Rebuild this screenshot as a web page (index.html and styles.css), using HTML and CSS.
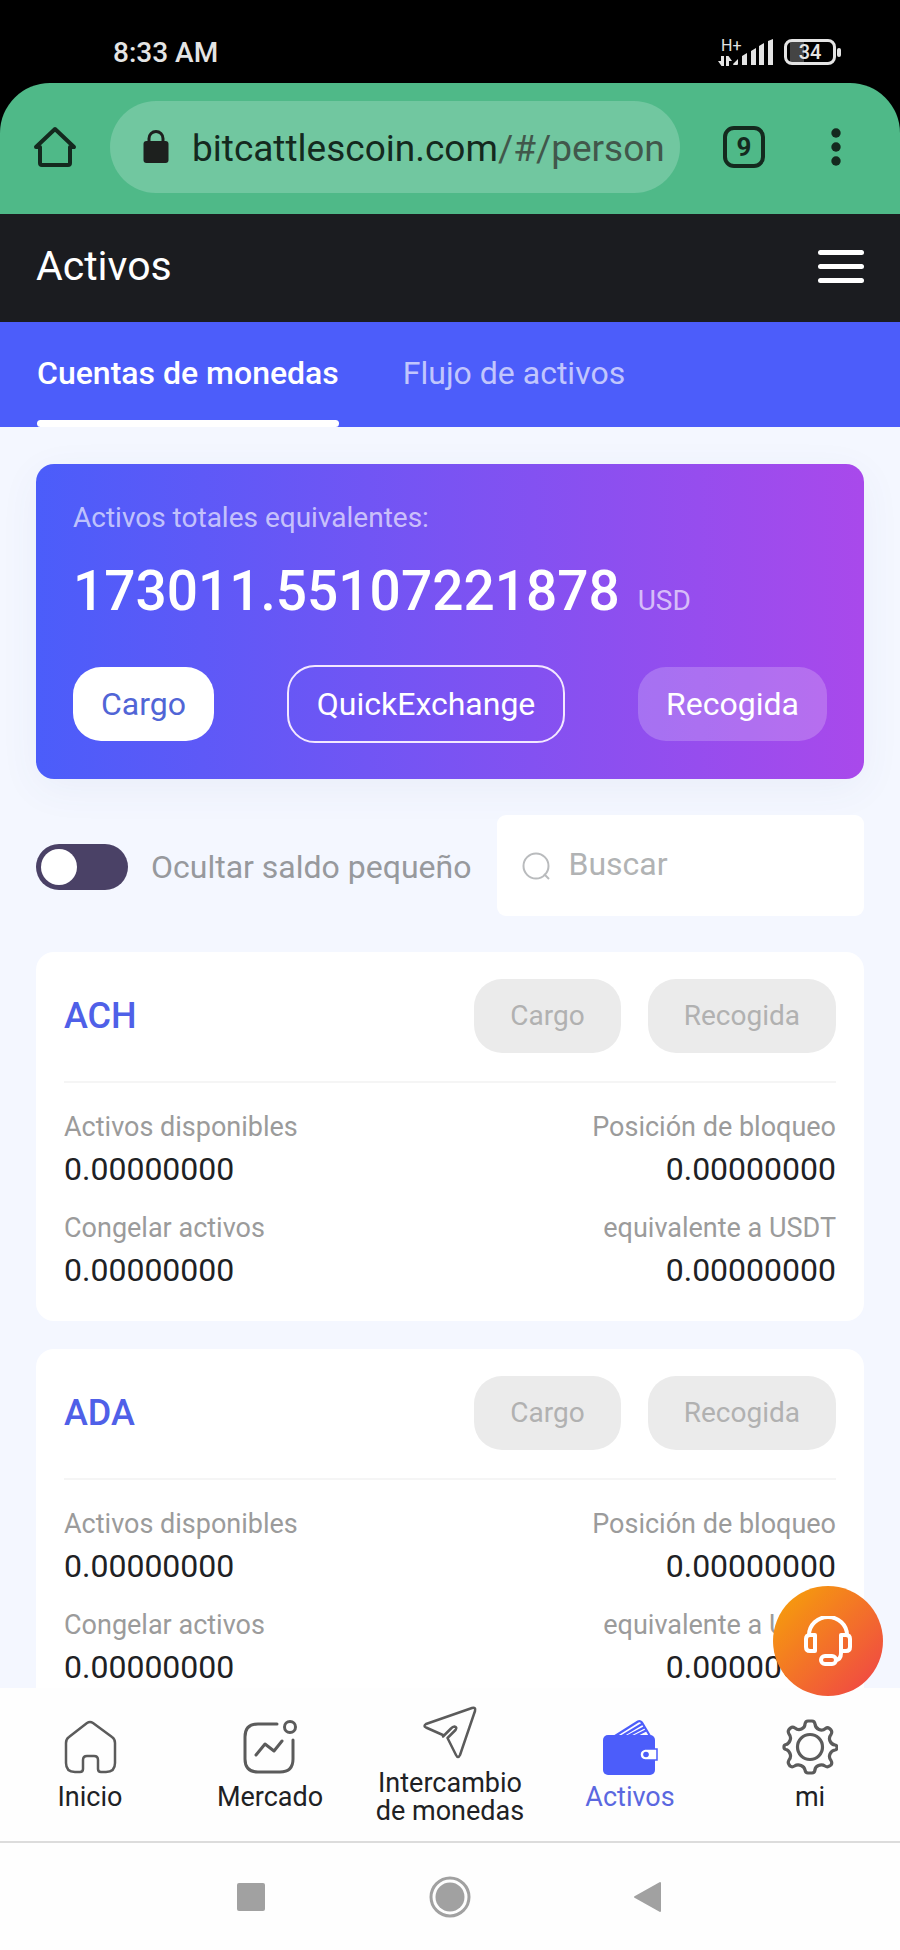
FILE: index.html
```html
<!DOCTYPE html>
<html lang="es">
<head>
<meta charset="utf-8">
<meta name="viewport" content="width=device-width, initial-scale=1">
<title>Activos</title>
<link rel="stylesheet" href="styles.css">
</head>
<body>
<div class="screen">
  <div class="status-bar">
    <span class="status-time">8:33 AM</span>
    <div class="status-icons">
      <div class="network">
        <span class="network-type">H+</span>
        <svg class="network-arrows" width="14" height="10" viewBox="0 0 14 10" aria-hidden="true"><path fill="#e4e4e4" d="M3 0h3v10H3.500L0 5h3zM8 10V0h2.500L14 5h-3v5z"/></svg>
      </div>
      <svg class="signal" width="42" height="27" viewBox="0 0 42 27" aria-hidden="true"><path fill="#e4e4e4" d="M0 25l5-5v5q0 1-1 1H1q-1 0-1-1zM9 17l5-3v12H9zM18 12l5-3v17h-5zM26 7l5-3v22h-5zM35 2l5-2v26h-5z"/></svg>
      <div class="battery">
        <span class="battery-body">34</span>
        <span class="battery-cap"></span>
      </div>
    </div>
  </div>

  <div class="browser-frame">
    <div class="browser-bar">
      <button class="icon-button" type="button" aria-label="Página principal">
        <svg width="44" height="44" viewBox="0 0 44 44" aria-hidden="true"><path fill="none" stroke="#14291e" stroke-width="4" stroke-linecap="round" stroke-linejoin="round" d="M3 22L22 4l19 18h-4v16q0 2-2 2H9q-2 0-2-2V22z"/></svg>
      </button>
      <div class="address">
        <svg width="26" height="34" viewBox="0 0 26 34" aria-hidden="true"><path fill="none" stroke="#1d201e" stroke-width="3" d="M6 12V8.500a7 7 0 0 1 14 0V12"/><rect x="0.500" y="11" width="25" height="22" rx="3" fill="#1d201e"/></svg>
        <span class="address-text">bitcattlescoin.com<span class="address-path">/#/person</span></span>
      </div>
      <button class="tab-count" type="button" aria-label="Pestañas abiertas">9</button>
      <button class="icon-button" type="button" aria-label="Más opciones">
        <svg width="10" height="40" viewBox="0 0 10 40" aria-hidden="true"><g fill="#14291e"><circle cx="5" cy="6" r="4.700"/><circle cx="5" cy="20" r="4.700"/><circle cx="5" cy="34" r="4.700"/></g></svg>
      </button>
    </div>
  </div>

  <header class="page-header">
    <h1 class="page-title">Activos</h1>
    <button class="menu-button" type="button" aria-label="Menú"><span></span><span></span><span></span></button>
  </header>

  <nav class="tabs" aria-label="Secciones">
    <a class="tab tab-active" href="#cuentas">Cuentas de monedas</a>
    <a class="tab" href="#flujo">Flujo de activos</a>
  </nav>

  <main class="content">
    <section class="balance">
      <p class="balance-label">Activos totales equivalentes:</p>
      <p class="balance-amount">173011.55107221878<span class="balance-unit">USD</span></p>
      <div class="balance-actions">
        <button class="pill pill-solid" type="button">Cargo</button>
        <button class="pill pill-outline" type="button">QuickExchange</button>
        <button class="pill pill-soft" type="button">Recogida</button>
      </div>
    </section>

    <div class="filters">
      <label class="hide-small">
        <input class="switch" type="checkbox">
        <span>Ocultar saldo pequeño</span>
      </label>
      <label class="search">
        <svg width="29" height="28" viewBox="0 0 29 28" aria-hidden="true"><g fill="none" stroke="#b9bbbd" stroke-width="2"><circle cx="14" cy="14" r="12.500"/><path d="M22 22l5 5"/></g></svg>
        <input class="search-input" type="search" placeholder="Buscar" aria-label="Buscar">
      </label>
    </div>

    <section class="assets">
      <article class="asset">
        <div class="asset-head">
          <h2 class="asset-name">ACH</h2>
          <button class="pill pill-muted" type="button" disabled>Cargo</button>
          <button class="pill pill-muted" type="button" disabled>Recogida</button>
        </div>
        <dl class="asset-data">
          <div><dt>Activos disponibles</dt><dd>0.00000000</dd></div>
          <div><dt>Posición de bloqueo</dt><dd>0.00000000</dd></div>
          <div><dt>Congelar activos</dt><dd>0.00000000</dd></div>
          <div><dt>equivalente a USDT</dt><dd>0.00000000</dd></div>
        </dl>
      </article>
      <article class="asset">
        <div class="asset-head">
          <h2 class="asset-name">ADA</h2>
          <button class="pill pill-muted" type="button" disabled>Cargo</button>
          <button class="pill pill-muted" type="button" disabled>Recogida</button>
        </div>
        <dl class="asset-data">
          <div><dt>Activos disponibles</dt><dd>0.00000000</dd></div>
          <div><dt>Posición de bloqueo</dt><dd>0.00000000</dd></div>
          <div><dt>Congelar activos</dt><dd>0.00000000</dd></div>
          <div><dt>equivalente a USDT</dt><dd>0.00000000</dd></div>
        </dl>
      </article>
    </section>
  </main>

  <footer class="bottom">
    <button class="support" type="button" aria-label="Atención al cliente">
      <svg width="50" height="50" viewBox="0 0 50 50" aria-hidden="true"><g fill="none" stroke="#fff" stroke-width="4" stroke-linejoin="round"><path d="M6 19a19 18 0 0 1 38 0"/><path d="M12 19v16H7q-4 0-4-4v-8q0-4 4-4zM38 19v16h5q4 0 4-4v-8q0-4-4-4z"/><path d="M38 34v3q0 7-6 7"/><rect x="18" y="40" width="15" height="8" rx="4"/></g></svg>
    </button>
    <nav class="bottom-nav" aria-label="Principal">
      <a class="nav-item" href="#inicio">
        <svg width="56" height="56" viewBox="0 0 56 56" aria-hidden="true"><path fill="none" stroke="#5b5b5b" stroke-width="2.500" stroke-linejoin="round" d="M25 4q3-2 6 0l19 14q3 2 3 6v20q0 9-9 9h-5q-3 0-3-3V41q0-4-4-4h-7q-4 0-4 4v9q0 3-3 3h-5q-9 0-9-9V24q0-4 3-6z"/></svg>
        <span>Inicio</span>
      </a>
      <a class="nav-item" href="#mercado">
        <svg width="56" height="56" viewBox="0 0 56 56" aria-hidden="true"><g fill="none" stroke="#5b5b5b" stroke-width="3" stroke-linecap="round" stroke-linejoin="round"><path d="M35 5H16Q3 5 3 18v22q0 13 13 13h22q13 0 13-13V21"/><circle cx="48" cy="8" r="5.500"/><path d="M14 36l9-11 9 7 8-10"/></g></svg>
        <span>Mercado</span>
      </a>
      <a class="nav-item" href="#intercambio">
        <svg width="56" height="56" viewBox="0 0 56 56" aria-hidden="true"><path fill="none" stroke="#5b5b5b" stroke-width="2.500" stroke-linejoin="round" d="M22 30.500L4 22.500Q1 21 4 19L50 3q4-1 3 3L38 50q-2 4-4 0L25.500 33l8-8q2-3-1-3.500-2 0-3.500 2L21 31.500z"/></svg>
        <span>Intercambio<br>de monedas</span>
      </a>
      <a class="nav-item nav-active" href="#activos">
        <svg width="56" height="56" viewBox="0 0 56 56" aria-hidden="true"><path fill="none" stroke="#4c5dfa" stroke-width="2.200" stroke-linejoin="round" d="M13 17L36 2.500q2-1 4 1L48 17M20 17l20-12M26 17l17-9M33 17l12-6"/><rect x="1" y="16" width="52" height="40" rx="5" fill="#4c5dfa"/><path fill="#fff" stroke="#4c5dfa" stroke-width="1.500" d="M55 30v11H43q-5-1-5-5.500T43 30z"/><circle cx="44" cy="35.500" r="2.800" fill="#4c5dfa"/></svg>
        <span>Activos</span>
      </a>
      <a class="nav-item" href="#mi">
        <svg width="56" height="56" viewBox="0 0 56 56" aria-hidden="true"><g fill="none" stroke="#5b5b5b" stroke-width="3.200" stroke-linejoin="round"><circle cx="28" cy="28" r="12.500"/><path d="M23 5q.5-3 3-3h4q2.500 0 3 3 .5 4 4 5.500t6.500-1q2-1.500 4 0l1.500 1.500q1.500 2 0 4.500-2.500 3-1 6.500t5 4q2 .5 2 2v1q0 1.500-2 2-3.500.5-5 4t1 6.500q1.500 2.500 0 4.500L47.500 47q-2 1.500-4.500 0-3-2-6.500-.5T33 51q-.5 3-3 3h-4q-2.500 0-3-3-.5-3-4-4.500t-6.500.5q-2.500 1.500-4.500 0L7 45.500q-1.500-2 0-4.500 2.500-3 1-6.500t-4-4q-2-.5-2-2v-1q0-1.500 2-2 2.500-.5 4-4T7 15q-1.500-2.500 0-4.500L8.500 9q2-1.500 4.500 0 3 2.500 6.500 1T23 5z"/></g></svg>
        <span>mi</span>
      </a>
    </nav>
    <div class="system-nav">
      <button type="button" aria-label="Recientes"><svg width="40" height="42" viewBox="0 0 40 42" aria-hidden="true"><rect x="6" y="7" width="28" height="28" rx="2" fill="#a1a1a1"/></svg></button>
      <button type="button" aria-label="Inicio"><svg width="42" height="42" viewBox="0 0 42 42" aria-hidden="true"><circle cx="21" cy="21" r="19" fill="none" stroke="#a1a1a1" stroke-width="3"/><circle cx="21" cy="21" r="14.500" fill="#a1a1a1"/></svg></button>
      <button type="button" aria-label="Atrás"><svg width="40" height="42" viewBox="0 0 40 42" aria-hidden="true"><path fill="#a1a1a1" stroke="#a1a1a1" stroke-width="2" stroke-linejoin="round" d="M6 21L31 7v28z"/></svg></button>
    </div>
  </footer>
</div>
</body>
</html>
```
FILE: styles.css
```css
* {
  box-sizing: border-box;
}

body {
  margin: 0;
  font-family: Roboto, "Liberation Sans", sans-serif;
  font-size: 28px;
  color: #202124;
  background: #f4f7ff;
}

h1, h2, p, dl, dd {
  margin: 0;
}

button, input {
  font: inherit;
}

button {
  padding: 0;
  border: 0;
  background: none;
}

a {
  color: inherit;
  text-decoration: none;
}

svg {
  display: block;
  flex: none;
}

.screen {
  display: flex;
  flex-direction: column;
  height: 100vh;
  overflow: hidden;
}

.status-bar,
.browser-frame,
.page-header,
.tabs,
.bottom {
  flex: none;
}

/* Device status bar */
.status-bar {
  display: flex;
  align-items: flex-end;
  justify-content: space-between;
  height: 83px;
  padding: 0 59px 13px 113px;
  background: #000;
  color: #e4e4e4;
}

.status-time {
  font-weight: 500;
  line-height: 34px;
}

.status-icons {
  display: flex;
  align-items: center;
  padding-bottom: 4px;
}

.network {
  display: flex;
  flex-direction: column;
  gap: 2px;
  width: 15px;
}

.network-type {
  padding-left: 3px;
  font-size: 16px;
  line-height: 16px;
}

.battery {
  display: flex;
  align-items: center;
  gap: 1px;
  margin-left: 9px;
}

.battery-body {
  width: 52px;
  border: 3px solid #e4e4e4;
  border-radius: 8px;
  background: linear-gradient(90deg, #000 3px, #444 3px 17px, #000 17px);
  font-size: 20px;
  font-weight: 500;
  line-height: 20px;
  text-align: center;
}

.battery-cap {
  width: 4px;
  height: 9px;
  border-radius: 2px;
  background: #e4e4e4;
}

/* Browser toolbar */
.browser-frame {
  background: #000;
}

.browser-bar {
  display: flex;
  align-items: center;
  height: 131px;
  padding: 0 59px 4px 33px;
  border-radius: 50px 50px 0 0;
  background: #4fb988;
}

.address {
  display: flex;
  flex: 1;
  align-items: center;
  gap: 23px;
  min-width: 0;
  height: 92px;
  margin: 0 43px 0 33px;
  padding: 0 12px 0 33px;
  border-radius: 46px;
  background: #71c7a0;
  color: #14291e;
}

.address-text {
  padding-top: 4px;
  overflow: hidden;
  font-size: 37px;
  white-space: nowrap;
}

.address-path {
  color: #41574b;
}

.tab-count {
  width: 42px;
  height: 42px;
  margin-right: 66px;
  border: 4px solid #14291e;
  border-radius: 11px;
  color: #14291e;
  font-size: 26px;
  font-weight: 700;
  line-height: 34px;
}

/* Page header */
.page-header {
  display: flex;
  align-items: center;
  justify-content: space-between;
  height: 108px;
  padding: 0 36px 4px;
  background: #1b1c20;
  color: #fff;
}

.page-title {
  font-size: 41px;
  font-weight: 400;
}

.menu-button {
  display: grid;
  gap: 9px;
  width: 46px;
}

.menu-button span {
  height: 5px;
  border-radius: 3px;
  background: #fff;
}

.tabs {
  display: flex;
  gap: 64px;
  height: 105px;
  padding: 0 37px;
  background: #4c5dfa;
  color: #c1c6fd;
  font-size: 32px;
  line-height: 102px;
}

.tab-active {
  color: #fff;
  font-weight: 500;
}

.tab-active::after {
  content: "";
  display: block;
  height: 7px;
  margin-top: -4px;
  border-radius: 4px;
  background: #fff;
}

/* Content */
.content {
  flex: 1;
  min-height: 0;
  padding: 37px 36px 0;
  overflow: hidden;
}

.balance {
  padding: 36px 37px;
  border-radius: 18px;
  background: linear-gradient(90deg, #4b5dfa, #a949eb);
  box-shadow: 0 10px 40px rgba(76, 93, 160, 0.06);
  color: #fff;
}

.balance-label {
  line-height: 36px;
  color: rgba(255, 255, 255, 0.65);
}

.balance-amount {
  margin-top: 19px;
  font-size: 55px;
  font-weight: 500;
  line-height: 72px;
}

.balance-unit {
  margin-left: 18px;
  color: rgba(255, 255, 255, 0.65);
  font-size: 28px;
  font-weight: 400;
  line-height: 28px;
}

.balance-actions {
  display: flex;
  align-items: center;
  justify-content: space-between;
  margin-top: 38px;
}

.pill {
  padding: 0 28px;
  border-radius: 28px;
  font-size: 32px;
  line-height: 74px;
}

.pill-solid {
  background: #fff;
  color: #5165d6;
}

.pill-outline {
  border: 2px solid #f3e8ff;
  color: #fff;
}

.pill-soft {
  background: rgba(255, 255, 255, 0.2);
  color: #fff;
}

.pill-muted {
  padding: 0 36px;
  background: #ebebeb;
  color: #b1b1b1;
  font-size: 28px;
}

.filters {
  display: flex;
  align-items: center;
  gap: 26px;
  margin-top: 36px;
  font-size: 32px;
}

.hide-small {
  display: flex;
  flex: none;
  align-items: center;
  gap: 23px;
  padding-top: 3px;
  color: #97999d;
}

.switch {
  flex: none;
  width: 92px;
  height: 46px;
  margin: 0;
  padding: 5px;
  border-radius: 23px;
  appearance: none;
  background: #4a4166;
}

.switch::before {
  content: "";
  display: block;
  width: 36px;
  height: 36px;
  border-radius: 50%;
  background: #fff;
}

.switch:checked::before {
  margin-left: auto;
}

.search {
  display: flex;
  flex: 1;
  align-items: center;
  gap: 17px;
  min-width: 0;
  height: 101px;
  padding: 0 25px;
  border-radius: 9px;
  background: #fff;
}

.search-input {
  flex: 1;
  min-width: 0;
  padding: 0 0 4px;
  border: 0;
  outline: 0;
  background: none;
  color: #202124;
}

.search-input::placeholder {
  color: #b1b3b4;
}

.assets {
  display: grid;
  gap: 28px;
  margin-top: 36px;
}

.asset {
  padding: 27px 28px 29px;
  border-radius: 18px;
  background: #fff;
}

.asset-head {
  display: flex;
  align-items: center;
  gap: 27px;
  padding-bottom: 28px;
  border-bottom: 2px solid #f5f5f5;
}

.asset-name {
  flex: 1;
  color: #4f60e8;
  font-size: 36px;
  font-weight: 500;
}

.asset-data {
  display: grid;
  grid-template-columns: 1fr 1fr;
  row-gap: 17px;
  padding-top: 24px;
}

.asset-data div:nth-child(even) {
  text-align: right;
}

.asset-data dt {
  color: #9b9b9b;
  font-size: 27px;
  line-height: 40px;
}

.asset-data dd {
  font-size: 32px;
  line-height: 44px;
}

/* Bottom navigation */
.bottom {
  position: relative;
  background: #fefefe;
}

.support {
  position: absolute;
  top: -102px;
  right: 17px;
  display: grid;
  place-items: center;
  width: 110px;
  height: 110px;
  border-radius: 50%;
  background: linear-gradient(135deg, #f69b0d 10%, #f04a43 90%);
}

.bottom-nav {
  display: grid;
  grid-template-columns: repeat(5, 1fr);
  height: 155px;
  border-bottom: 2px solid #dcdcdc;
  font-size: 27px;
  line-height: 28px;
  text-align: center;
}

.nav-item {
  display: flex;
  flex-direction: column;
  align-items: center;
  justify-content: center;
  gap: 8px;
}

.nav-active {
  color: #5b68e0;
}

.system-nav {
  display: flex;
  align-items: center;
  justify-content: center;
  gap: 158px;
  height: 107px;
}
```
